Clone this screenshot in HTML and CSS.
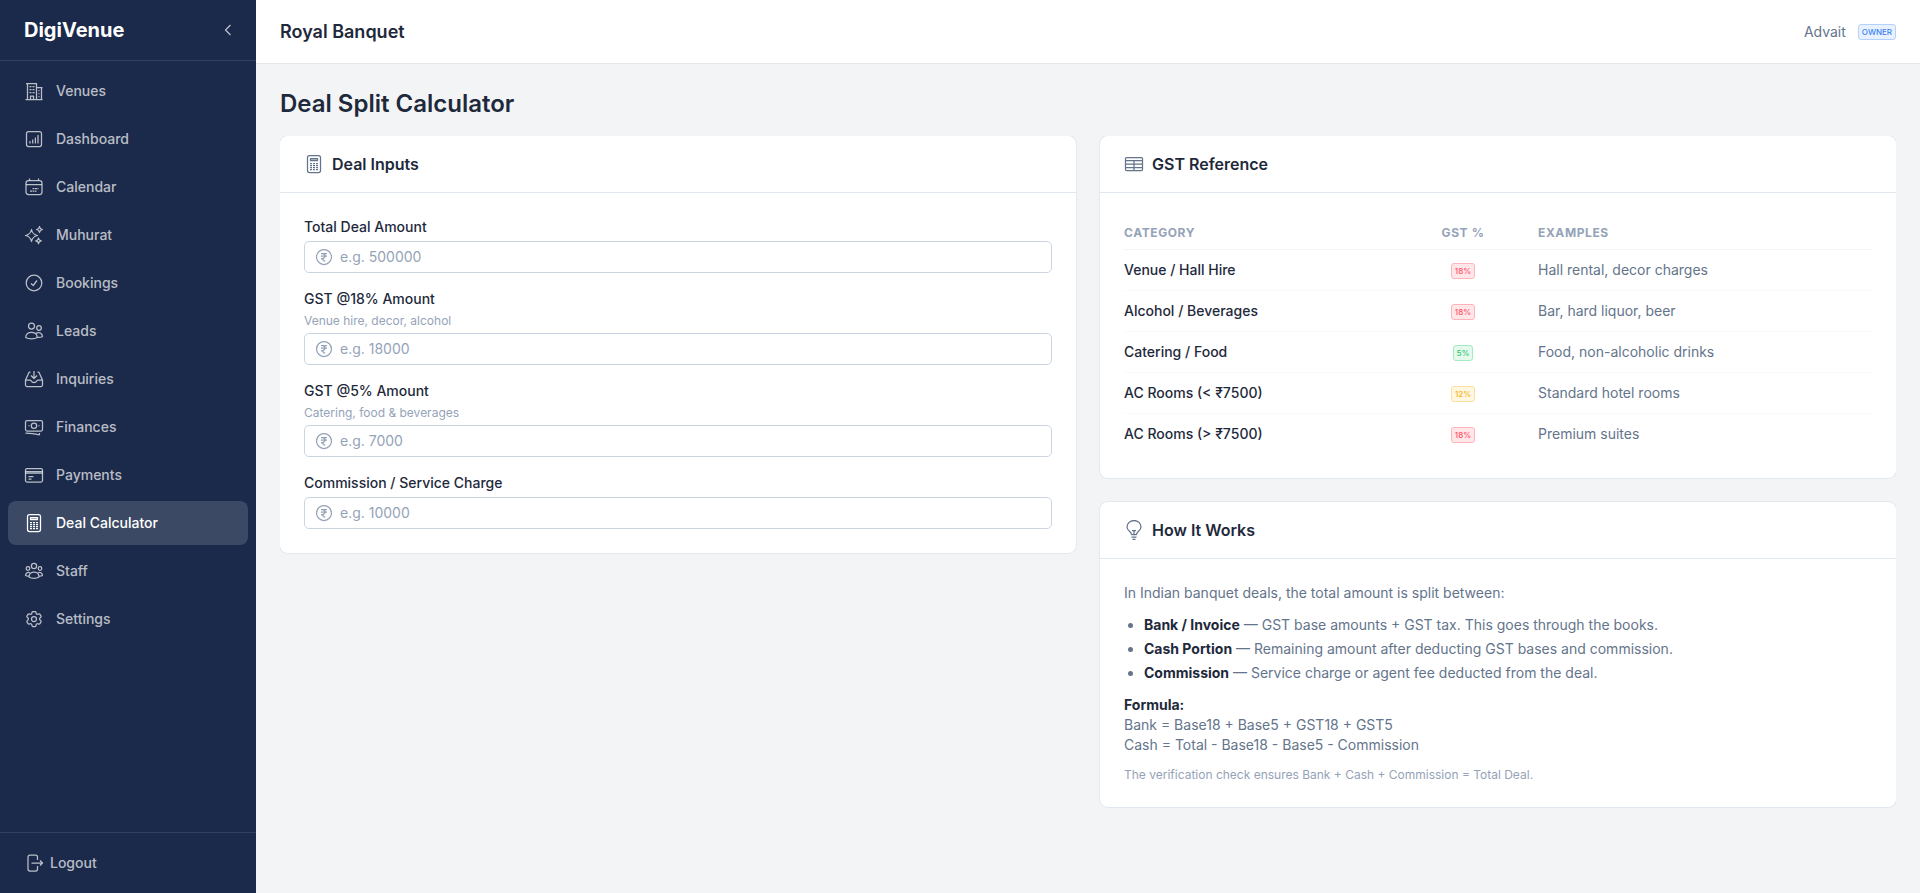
FILE: index.html
```html
<!DOCTYPE html>
<html lang="en">
<head>
    <meta charset="UTF-8">
    <meta name="viewport" content="width=device-width, initial-scale=1.0">
    <title>DigiVenue - Deal Split Calculator</title>
    <link rel="stylesheet" href="styles.css">
</head>
<body>
    <!-- Shared icons -->
    <svg class="sprite" aria-hidden="true">
        <symbol id="icon-calculator" viewBox="0 0 20 20">
            <rect x="3.5" y="1.5" width="13" height="17" rx="2"/>
            <rect x="6.5" y="4.5" width="7" height="2" fill="currentColor" fill-opacity="0.4"/>
            <path d="M6 9.5h8M6 11.5h8M6 13.5h8M6 15.5h8" stroke-dasharray="2 1"/>
        </symbol>
        <symbol id="icon-rupee" viewBox="0 0 20 20">
            <circle cx="10" cy="10" r="7.5"/>
            <path d="M7 6.5h6M7 9h6M8 6.5c4 0 4 5 0 5H7.5l3.5 3"/>
        </symbol>
    </svg>

    <aside class="sidebar">
        <div class="brand">
            <span class="brand-name">DigiVenue</span>
            <button class="collapse-btn" type="button" aria-label="Collapse">
                <svg class="icon" viewBox="0 0 20 20"><path d="M12.5 5l-5 5 5 5"/></svg>
            </button>
        </div>

        <nav class="nav">
            <a href="#" class="nav-item">
                <svg class="icon" viewBox="0 0 20 20">
                    <path d="M1.5 18.5h17M3.5 18.500v-16M2 2.500h11M12.500 2.500v16M12.500 6.500h6M17.500 6.500v12M6.500 18.500v-3.500h3v3.500"/>
                    <path d="M5.500 5.500h2M8.500 5.500h2M5.500 8.500h2M8.500 8.500h2M5.500 11.500h2M8.500 11.500h2M14.500 9.500h1M14.500 12.500h1M14.500 15.500h1"/>
                </svg>
                Venues
            </a>
            <a href="#" class="nav-item">
                <svg class="icon" viewBox="0 0 20 20">
                    <rect x="2.500" y="2.500" width="15" height="15" rx="2"/>
                    <path d="M6 12v2.500M8.700 10.500v4M11.400 8.500v6M14 6v8.500"/>
                </svg>
                Dashboard
            </a>
            <a href="#" class="nav-item">
                <svg class="icon" viewBox="0 0 20 20">
                    <rect x="2" y="3.500" width="16" height="14" rx="2.500"/>
                    <path d="M5.500 1.500v2M14.500 1.500v2M2 7.500h16"/>
                    <path d="M8.500 11.500h6M6 14h6.500" stroke-dasharray="2 .5"/>
                </svg>
                Calendar
            </a>
            <a href="#" class="nav-item">
                <svg class="icon" viewBox="0 0 20 20">
                    <path d="M7.500 4.500q1 5 6 6-5 1-6 6-1-5-6-6 5-1 6-6z"/>
                    <path d="M15.500 1.500q.4 2.600 3 3-2.600.4-3 3-.4-2.600-3-3 2.600-.4 3-3zM14.500 13q.3 2.500 2.800 2.800-2.500.3-2.800 2.800-.3-2.500-2.800-2.800 2.500-.3 2.800-2.800z"/>
                </svg>
                Muhurat
            </a>
            <a href="#" class="nav-item">
                <svg class="icon" viewBox="0 0 20 20"><circle cx="10" cy="10" r="7.800"/><path d="M7 10.500l2.200 2L13 7.500"/></svg>
                Bookings
            </a>
            <a href="#" class="nav-item">
                <svg class="icon" viewBox="0 0 20 20">
                    <circle cx="7.500" cy="5" r="3"/><circle cx="15" cy="7" r="2.300"/>
                    <path d="M1.700 16.500c0-7 11.600-7 11.600 0-2.800 1.800-8.800 1.800-11.600 0zM12 12.300c3-1.800 6.300 0 6.500 3.200-1.500.9-3.300 1.100-5.200.9"/>
                </svg>
                Leads
            </a>
            <a href="#" class="nav-item">
                <svg class="icon" viewBox="0 0 20 20">
                    <path d="M6.500 3H5.200L1.500 11v5q0 1.500 1.500 1.500h14q1.500 0 1.500-1.500v-5L14.800 3h-1.300M1.500 11h4.500q1 0 1.500 1.300.5 1.200 2.500 1.200t2.500-1.200q.5-1.300 1.500-1.300h4.500M10 2v7.500M7 6.500l3 3 3-3"/>
                </svg>
                Inquiries
            </a>
            <a href="#" class="nav-item">
                <svg class="icon" viewBox="0 0 20 20">
                    <rect x="1.500" y="3.500" width="17" height="10.500" rx="1.500"/>
                    <circle cx="10" cy="8.700" r="2.700"/>
                    <path d="M4.500 8.700h1M14.500 8.700h1M1.500 16c5 0 9 .5 13 1.700q1 .3 1-.7v-1"/>
                </svg>
                Finances
            </a>
            <a href="#" class="nav-item">
                <svg class="icon" viewBox="0 0 20 20">
                    <rect x="1.500" y="3.500" width="17" height="13.500" rx="1.500"/>
                    <path d="M1.500 6.500h17M1.500 8h17M4.500 11.500h5M4.500 14h3"/>
                </svg>
                Payments
            </a>
            <a href="#" class="nav-item active">
                <svg class="icon"><use href="#icon-calculator"/></svg>
                Deal Calculator
            </a>
            <a href="#" class="nav-item">
                <svg class="icon" viewBox="0 0 20 20">
                    <circle cx="10" cy="5" r="2.600"/><circle cx="4" cy="7.500" r="1.800"/><circle cx="16" cy="7.500" r="1.800"/>
                    <path d="M5 16c0-6.500 10-6.500 10 0-2.500 1.800-7.500 1.800-10 0zM6 11.800c-2-1.300-4.300.2-4.500 2.700q1.500.9 3.500.7M14 11.800c2-1.300 4.300.2 4.500 2.700q-1.500.9-3.500.7"/>
                </svg>
                Staff
            </a>
            <a href="#" class="nav-item">
                <svg class="icon icon-gear" viewBox="0 0 24 24">
                    <path d="M9.594 3.940c.09-.542.56-.94 1.110-.94h2.593c.55 0 1.020.398 1.110.94l.213 1.281c.063.374.313.686.645.87.074.04.147.083.22.127.325.196.72.257 1.075.124l1.217-.456a1.125 1.125 0 0 1 1.370.49l1.296 2.247a1.125 1.125 0 0 1-.26 1.431l-1.003.827c-.293.241-.438.613-.43.992a7.723 7.723 0 0 1 0 .255c-.008.378.137.75.43.991l1.004.827c.424.35.534.955.26 1.430l-1.298 2.247a1.125 1.125 0 0 1-1.369.491l-1.217-.456c-.355-.133-.75-.072-1.076.124a6.470 6.470 0 0 1-.22.128c-.331.183-.581.495-.644.869l-.213 1.281c-.09.543-.56.940-1.110.940h-2.594c-.55 0-1.019-.398-1.110-.94l-.213-1.281c-.062-.374-.312-.686-.644-.87a6.520 6.520 0 0 1-.22-.127c-.325-.196-.72-.257-1.076-.124l-1.217.456a1.125 1.125 0 0 1-1.369-.49l-1.297-2.247a1.125 1.125 0 0 1 .26-1.431l1.004-.827c.292-.24.437-.613.430-.991a6.932 6.932 0 0 1 0-.255c.007-.38-.138-.751-.430-.992l-1.004-.827a1.125 1.125 0 0 1-.26-1.430l1.297-2.247a1.125 1.125 0 0 1 1.370-.491l1.216.456c.356.133.751.072 1.076-.124.072-.044.146-.086.220-.128.332-.183.582-.495.644-.869l.214-1.280Z"/>
                    <circle cx="12" cy="12" r="3"/>
                </svg>
                Settings
            </a>
        </nav>

        <div class="sidebar-footer">
            <button class="logout-btn" type="button">
                <svg class="icon" viewBox="0 0 20 20">
                    <path d="M13.500 7V4q0-2-2-2H6q-2 0-2 2v12q0 2 2 2h5.500q2 0 2-2v-3M7.500 10h11M16 7.500l2.500 2.500-2.500 2.500"/>
                </svg>
                Logout
            </button>
        </div>
    </aside>

    <div class="page">
        <header class="topbar">
            <span class="venue-name">Royal Banquet</span>
            <div class="user">
                <span class="user-name">Advait</span>
                <span class="badge badge-blue">OWNER</span>
            </div>
        </header>

        <main class="content">
            <h1>Deal Split Calculator</h1>

            <div class="columns">
                <section class="card">
                    <div class="card-header">
                        <svg class="icon"><use href="#icon-calculator"/></svg>
                        <h2>Deal Inputs</h2>
                    </div>
                    <form class="card-body deal-form">
                        <div class="field">
                            <label for="total">Total Deal Amount</label>
                            <div class="input-box">
                                <svg class="icon"><use href="#icon-rupee"/></svg>
                                <input type="text" id="total" inputmode="decimal" placeholder="e.g. 500000">
                            </div>
                        </div>
                        <div class="field">
                            <label for="gst18">GST @18% Amount</label>
                            <span class="hint">Venue hire, decor, alcohol</span>
                            <div class="input-box">
                                <svg class="icon"><use href="#icon-rupee"/></svg>
                                <input type="text" id="gst18" inputmode="decimal" placeholder="e.g. 18000">
                            </div>
                        </div>
                        <div class="field">
                            <label for="gst5">GST @5% Amount</label>
                            <span class="hint">Catering, food &amp; beverages</span>
                            <div class="input-box">
                                <svg class="icon"><use href="#icon-rupee"/></svg>
                                <input type="text" id="gst5" inputmode="decimal" placeholder="e.g. 7000">
                            </div>
                        </div>
                        <div class="field">
                            <label for="commission">Commission / Service Charge</label>
                            <div class="input-box">
                                <svg class="icon"><use href="#icon-rupee"/></svg>
                                <input type="text" id="commission" inputmode="decimal" placeholder="e.g. 10000">
                            </div>
                        </div>
                    </form>
                </section>

                <div class="side">
                    <section class="card">
                        <div class="card-header">
                            <svg class="icon" viewBox="0 0 20 20">
                                <rect x="1.500" y="3.500" width="17" height="13" rx="1"/>
                                <path d="M1.500 6.500h17M1.500 10h17M1.500 13.500h17M10 6.500v10"/>
                            </svg>
                            <h2>GST Reference</h2>
                        </div>
                        <div class="card-body">
                            <table class="gst-table">
                                <thead>
                                    <tr><th class="col-category">Category</th><th class="col-rate">GST %</th><th>Examples</th></tr>
                                </thead>
                                <tbody>
                                    <tr><td>Venue / Hall Hire</td><td class="rate"><span class="badge badge-red">18%</span></td><td class="examples">Hall rental, decor charges</td></tr>
                                    <tr><td>Alcohol / Beverages</td><td class="rate"><span class="badge badge-red">18%</span></td><td class="examples">Bar, hard liquor, beer</td></tr>
                                    <tr><td>Catering / Food</td><td class="rate"><span class="badge badge-green">5%</span></td><td class="examples">Food, non-alcoholic drinks</td></tr>
                                    <tr><td>AC Rooms (&lt; ₹7500)</td><td class="rate"><span class="badge badge-yellow">12%</span></td><td class="examples">Standard hotel rooms</td></tr>
                                    <tr><td>AC Rooms (&gt; ₹7500)</td><td class="rate"><span class="badge badge-red">18%</span></td><td class="examples">Premium suites</td></tr>
                                </tbody>
                            </table>
                        </div>
                    </section>

                    <section class="card">
                        <div class="card-header">
                            <svg class="icon" viewBox="0 0 20 20">
                                <path d="M7.500 14.500c0-3-4.500-3.500-4.500-7.500a7 6.500 0 0 1 14 0c0 4-4.500 4.500-4.500 7.500zM10 14.500v-4M8 10.500h4M7.500 17h5M8.500 19.300h3"/>
                            </svg>
                            <h2>How It Works</h2>
                        </div>
                        <div class="card-body info">
                            <p>In Indian banquet deals, the total amount is split between:</p>
                            <ul>
                                <li><strong>Bank / Invoice</strong> — GST base amounts + GST tax. This goes through the books.</li>
                                <li><strong>Cash Portion</strong> — Remaining amount after deducting GST bases and commission.</li>
                                <li><strong>Commission</strong> — Service charge or agent fee deducted from the deal.</li>
                            </ul>
                            <p>
                                <strong>Formula:</strong><br>
                                Bank = Base18 + Base5 + GST18 + GST5<br>
                                Cash = Total - Base18 - Base5 - Commission
                            </p>
                            <p class="hint">The verification check ensures Bank + Cash + Commission = Total Deal.</p>
                        </div>
                    </section>
                </div>
            </div>
        </main>
    </div>
</body>
</html>
```

FILE: styles.css
```css
:root {
    --navy: #1b2a4a;
    --text: #1e293b;
    --text-soft: #64748b;
    --text-muted: #94a3b8;
    --border: #e2e8f0;
    --page-bg: #f3f4f6;
}

* {
    margin: 0;
    padding: 0;
    box-sizing: border-box;
}

body {
    display: flex;
    min-height: 100vh;
    background: var(--page-bg);
    color: var(--text);
    font-family: Inter, sans-serif;
    font-size: 14px;
    line-height: 20px;
}

button,
input {
    font: inherit;
    color: inherit;
    background: none;
    border: none;
}

.sprite {
    display: none;
}

.icon {
    width: 20px;
    height: 20px;
    flex-shrink: 0;
    fill: none;
    stroke: currentColor;
    stroke-width: 1.25;
    stroke-linejoin: round;
}

.icon-gear {
    stroke-width: 1.5;
}

/* Sidebar */
.sidebar {
    display: flex;
    flex-direction: column;
    width: 256px;
    flex-shrink: 0;
    background: var(--navy);
    color: rgba(255, 255, 255, 0.7);
    font-weight: 500;
}

.brand {
    display: flex;
    align-items: center;
    justify-content: space-between;
    padding: 16px 18px 16px 24px;
    border-bottom: 1px solid rgba(255, 255, 255, 0.1);
}

.brand-name {
    color: #fff;
    font-size: 20px;
    line-height: 28px;
    font-weight: 700;
}

.collapse-btn {
    display: flex;
    cursor: pointer;
}

.nav {
    flex: 1;
    display: flex;
    flex-direction: column;
    gap: 4px;
    padding: 8px;
}

.nav-item {
    display: flex;
    align-items: center;
    gap: 12px;
    padding: 12px 16px;
    border-radius: 8px;
    color: inherit;
    text-decoration: none;
}

.nav-item.active {
    background: rgba(255, 255, 255, 0.15);
    color: #fff;
}

.sidebar-footer {
    padding: 20px 24px;
    border-top: 1px solid rgba(255, 255, 255, 0.1);
}

.logout-btn {
    display: flex;
    align-items: center;
    gap: 6px;
    font-weight: 500;
    cursor: pointer;
}

/* Top bar */
.page {
    flex: 1;
    min-width: 0;
}

.topbar {
    display: flex;
    align-items: center;
    justify-content: space-between;
    height: 64px;
    padding: 0 24px;
    background: #fff;
    border-bottom: 1px solid #e5e7eb;
}

.venue-name {
    font-size: 18px;
    line-height: 28px;
    font-weight: 600;
}

.user {
    display: flex;
    align-items: center;
    gap: 12px;
}

.user-name {
    color: var(--text-soft);
}

.badge {
    display: inline-block;
    height: 16px;
    padding: 0 3px;
    border: 1px solid;
    border-radius: 3px;
    font-size: 8px;
    line-height: 14px;
    font-weight: 500;
    vertical-align: middle;
}

.badge-blue {
    color: #3b82f6;
    background: #e8f1fe;
    border-color: #b3d1fd;
}

.badge-red {
    color: #ff4d67;
    background: #ffe6e9;
    border-color: #ffb3bd;
}

.badge-green {
    color: #2ac770;
    background: #e5f9ed;
    border-color: #a5e9c1;
}

.badge-yellow {
    color: #f5b31f;
    background: #fff7e0;
    border-color: #fce0a0;
}

/* Content */
.content {
    padding: 24px 24px 0;
}

h1 {
    margin-bottom: 16px;
    font-size: 24px;
    line-height: 32px;
    font-weight: 600;
}

.columns {
    display: grid;
    grid-template-columns: 1fr 1fr;
    gap: 24px;
    align-items: start;
    padding-bottom: 24px;
    overflow: hidden;
}

.side {
    display: flex;
    flex-direction: column;
    gap: 24px;
}

.card {
    background: #fff;
    border-radius: 8px;
    box-shadow: 0 0 0 1px var(--border);
}

.card-header {
    display: flex;
    align-items: center;
    gap: 8px;
    padding: 16px 24px;
    border-bottom: 1px solid var(--border);
}

.card-header .icon {
    color: var(--text-soft);
}

h2 {
    font-size: 16px;
    line-height: 24px;
    font-weight: 600;
}

.card-body {
    padding: 24px;
}

.deal-form {
    display: flex;
    flex-direction: column;
    gap: 16px;
}

.field {
    display: flex;
    flex-direction: column;
    gap: 4px;
}

.field label {
    font-weight: 500;
}

.hint {
    color: var(--text-muted);
    font-size: 12px;
    line-height: 16px;
}

.input-box {
    display: flex;
    align-items: center;
    gap: 6px;
    height: 32px;
    padding: 0 9px;
    border: 1px solid #cbd5e1;
    border-radius: 5px;
    color: var(--text-muted);
}

.input-box:focus-within {
    border-color: #3b82f6;
}

.input-box input {
    flex: 1;
    min-width: 0;
    color: var(--text);
    outline: none;
}

.input-box input::placeholder {
    color: var(--text-muted);
}

/* GST table */
.gst-table {
    width: 100%;
    border-collapse: separate;
    border-spacing: 0;
    table-layout: fixed;
}

.gst-table th {
    padding: 8px 0;
    border-bottom: 1px solid #f1f5f9;
    color: var(--text-muted);
    font-size: 12px;
    line-height: 16px;
    font-weight: 700;
    letter-spacing: 0.05em;
    text-align: left;
    text-transform: uppercase;
}

.gst-table .col-category {
    width: 264px;
}

.gst-table .col-rate {
    width: 150px;
    text-align: center;
}

.gst-table td {
    padding: 10px 0;
    border-bottom: 1px solid #f8fafc;
    font-weight: 500;
}

.gst-table tr:last-child td {
    border-bottom: none;
}

.gst-table .rate {
    text-align: center;
}

.gst-table .examples {
    color: var(--text-soft);
    font-weight: 400;
}

/* How it works */
.info {
    display: flex;
    flex-direction: column;
    gap: 12px;
    color: var(--text-soft);
}

.info ul {
    display: flex;
    flex-direction: column;
    gap: 4px;
    padding-left: 20px;
}

.info strong {
    color: var(--text);
    font-weight: 700;
}
```
